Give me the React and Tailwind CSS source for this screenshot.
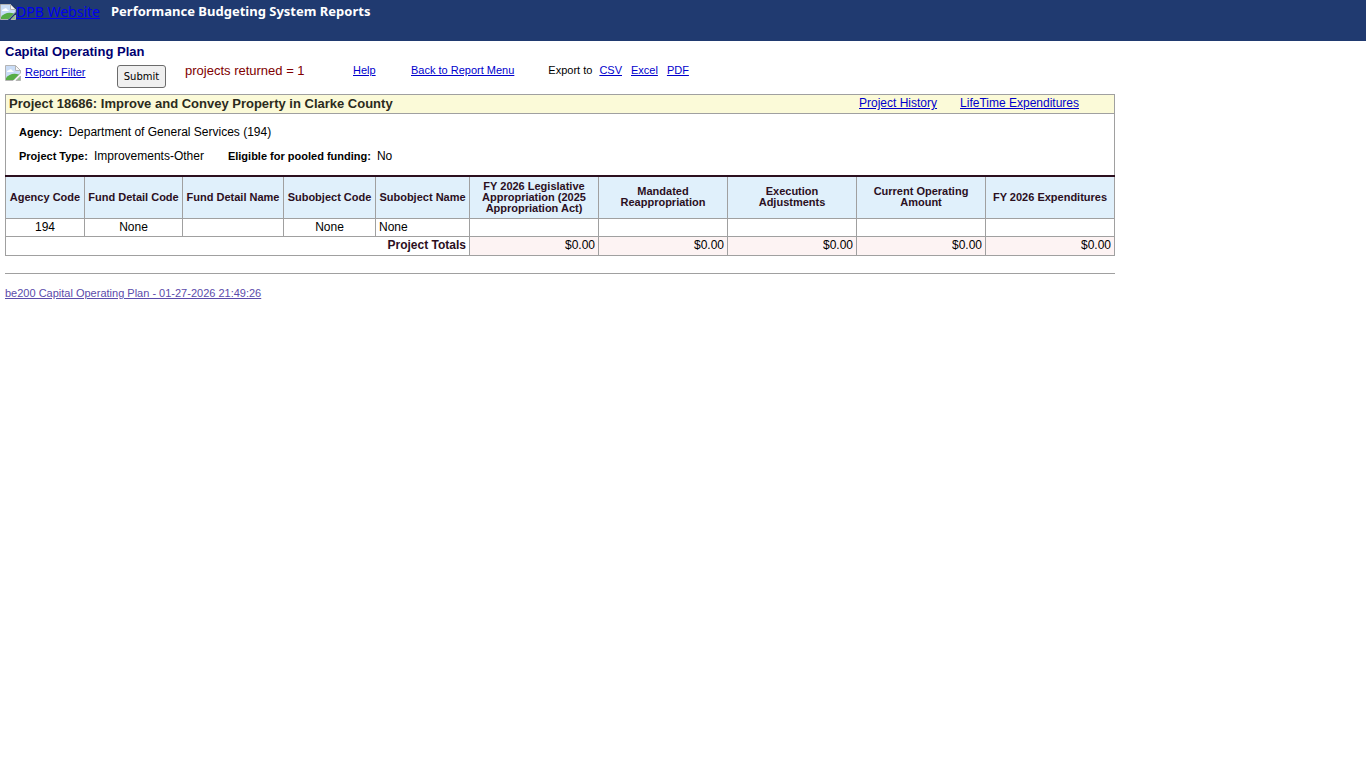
const money = 'border border-[#a0a0a0] bg-[#fdf3f3] px-[3px] text-right'
const linkStyle = 'text-[#0000cc] underline'

const columns = [
  { label: 'Agency Code', value: '194', width: 'w-[79px]', align: 'text-center' },
  { label: 'Fund Detail Code', value: 'None', width: 'w-[98px]', align: 'text-center' },
  { label: 'Fund Detail Name', value: '', width: 'w-[101px]', align: 'text-left' },
  { label: 'Subobject Code', value: 'None', width: 'w-[92px]', align: 'text-center' },
  { label: 'Subobject Name', value: 'None', width: 'w-[94px]', align: 'text-left' },
  { label: 'FY 2026 Legislative Appropriation (2025 Appropriation Act)', width: 'w-[129px]', pad: 'px-[6px]', total: '$0.00' },
  { label: 'Mandated Reappropriation', width: 'w-[129px]', pad: 'px-[6px]', total: '$0.00' },
  { label: 'Execution Adjustments', width: 'w-[129px]', pad: 'px-[6px]', total: '$0.00' },
  { label: 'Current Operating Amount', width: 'w-[129px]', pad: 'px-[6px]', total: '$0.00' },
  { label: 'FY 2026 Expenditures', width: 'w-[129px]', pad: 'px-[6px]', total: '$0.00' },
]

function PictureIcon() {
  return (
    <svg viewBox="0 0 16 16" className="h-4 w-4 shrink-0" aria-hidden="true">
      <path d="M0.5 0.5H10.5L15.5 5.5V8L8 15.5H0.5Z" fill="#c9dcf6" stroke="#b4b4b4" />
      <path d="M2 7C2 5.6 3.2 5 4 5.3C4.5 3.8 6.8 3.8 7.1 5.4C8.2 5.4 8.7 6.2 8.6 7Z" fill="#fff" />
      <path d="M1 15V13C3.5 9.5 8.5 7.5 14 9.5L8.5 15Z" fill="#56ad45" />
      <path d="M10.5 0.5V5.5H15.5Z" fill="#f6f6f6" stroke="#b4b4b4" strokeLinejoin="round" />
      <path d="M15.5 11V15.5H11Z" fill="#8cc681" stroke="#b4b4b4" />
    </svg>
  )
}

function Toolbar() {
  return (
    <form className="flex h-[26px] items-start text-[11px] leading-[13px]" onSubmit={(e) => e.preventDefault()}>
      <a href="#filter" className="flex w-28 items-start gap-1 text-[#0000cc]">
        <PictureIcon />
        <span className="leading-[15px] underline">Report Filter</span>
      </a>
      <button
        type="submit"
        className="h-[23px] w-[49px] rounded-[3px] border border-[#6b6b6b] bg-[#efefef] font-['DejaVu_Sans',sans-serif] text-[10px] text-black"
      >
        Submit
      </button>
      <div className="-mt-px ml-[19px] flex">
        <p className="w-[168px] text-[13px] text-[#800000]">projects returned = 1</p>
        <a href="#help" className={`w-[58px] ${linkStyle}`}>Help</a>
        <a href="#menu" className={linkStyle}>Back to Report Menu</a>
        <span className="mr-[7px] ml-[34px]">Export to</span>
        <span className="flex gap-[9px]">
          <a href="#csv" className={linkStyle}>CSV</a>
          <a href="#excel" className={linkStyle}>Excel</a>
          <a href="#pdf" className={linkStyle}>PDF</a>
        </span>
      </div>
    </form>
  )
}

function ProjectTable() {
  return (
    <table className="w-full table-fixed border-collapse text-[12px] leading-[14px] text-black">
      <thead>
        <tr className="h-[42px] border-t-2 border-[#2b0f1e] bg-[#e0f0fb] text-[11px] leading-[11px] text-[#2b0f1e]">
          {columns.map((c) => (
            <th key={c.label} scope="col" className={`${c.width} ${c.pad || 'px-[3px]'} border-x border-b border-x-[#a0a0a0] border-b-[#a0a0a0] font-bold`}>
              {c.label}
            </th>
          ))}
        </tr>
      </thead>
      <tbody>
        <tr className="h-[18px]">
          {columns.map((c) => (
            <td key={c.label} className={`border border-[#a0a0a0] px-[3px] ${c.align || 'text-right'}`}>{c.value}</td>
          ))}
        </tr>
        <tr className="h-[19px] align-top">
          <th scope="row" colSpan={5} className="border border-[#a0a0a0] px-[3px] pt-px text-right font-bold text-[#2b0f1e]">
            Project Totals
          </th>
          {columns.slice(5).map((c) => (
            <td key={c.label} className={`${money} pt-px`}>{c.total}</td>
          ))}
        </tr>
      </tbody>
    </table>
  )
}

export default function App() {
  return (
    <div className="font-['Liberation_Sans',Arial,sans-serif] text-black">
      <header className="flex h-[41px] items-start bg-[#203a70] pt-1 font-['Noto_Sans',sans-serif]">
        <a href="#home" className="flex w-[111px] items-start text-[14px] leading-4 text-[#0000ee]">
          <PictureIcon />
          <span className="whitespace-nowrap underline">DPB Website</span>
        </a>
        <p className="text-[13px] leading-[14px] font-bold text-white">Performance Budgeting System Reports</p>
      </header>
      <main className="max-w-[1120px] px-[5px]">
        <h1 className="pt-[3px] pb-[6px] text-[13px] leading-[15px] font-bold text-[#000070]">Capital Operating Plan</h1>
        <Toolbar />
        <section className="mt-[3px]">
          <div className="flex h-5 items-start border border-[#a0a0a0] bg-[#fbfad8] px-[3px] pt-px text-[12px] leading-[14px]">
            <h2 className="flex-1 text-[13px] leading-4 font-bold text-[#2b2b1c]">Project 18686: Improve and Convey Property in Clarke County</h2>
            <nav className="mr-8 flex gap-[23px]">
              <a href="#history" className={linkStyle}>Project History</a>
              <a href="#lifetime" className={linkStyle}>LifeTime Expenditures</a>
            </nav>
          </div>
          <dl className="flex h-[61px] flex-col gap-[10px] border-x border-[#a0a0a0] px-[13px] pt-[11px] text-[12px] leading-[14px]">
            <div className="flex gap-[6px]">
              <dt className="text-[11px] font-bold">Agency:</dt>
              <dd>Department of General Services (194)</dd>
            </div>
            <div className="flex gap-6">
              <div className="flex gap-[6px]">
                <dt className="text-[11px] font-bold">Project Type:</dt>
                <dd>Improvements-Other</dd>
              </div>
              <div className="flex gap-[6px]">
                <dt className="text-[11px] font-bold">Eligible for pooled funding:</dt>
                <dd>No</dd>
              </div>
            </div>
          </dl>
          <ProjectTable />
        </section>
        <footer className="mt-[17px] border-t border-[#a0a0a0] pt-[13px] text-[11px] leading-[13px]">
          <a href="#be200" className="text-[#5b4bab] underline">be200 Capital Operating Plan - 01-27-2026 21:49:26</a>
        </footer>
      </main>
    </div>
  )
}
